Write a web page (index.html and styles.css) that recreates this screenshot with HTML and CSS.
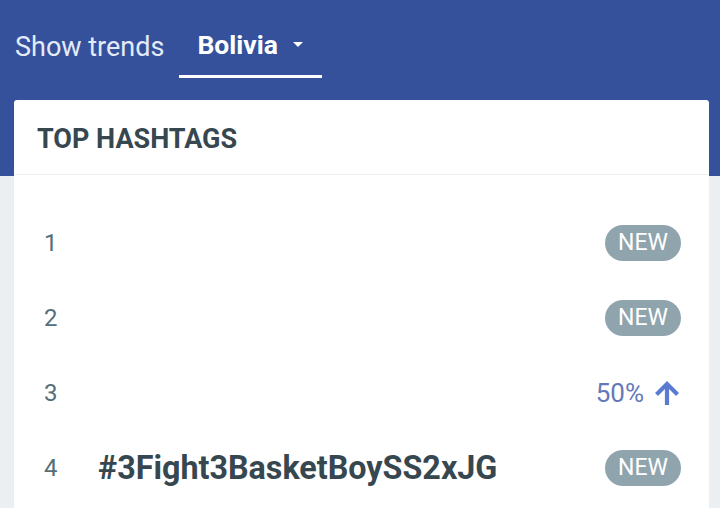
FILE: index.html
```html
<!DOCTYPE html>
<html>
<head>
<meta charset="utf-8">
<link rel="stylesheet" href="styles.css">
</head>
<body>
<header class="topbar">
  <nav class="nav">
    <span class="nav-label">Show trends</span>
    <div class="select">
      <span class="select-value">Bolivia</span>
      <span class="caret"></span>
    </div>
  </nav>
</header>
<main class="content">
  <section class="card">
    <h2 class="card-title">TOP HASHTAGS</h2>
    <ol class="list">
      <li class="row"><span class="rank">1</span><span class="tag"></span><span class="badge">NEW</span></li>
      <li class="row"><span class="rank">2</span><span class="tag"></span><span class="badge">NEW</span></li>
      <li class="row"><span class="rank">3</span><span class="tag"></span><span class="change">50%<svg class="arrow" viewBox="0 0 28 28" width="28" height="28"><path d="M14 26V5M3.5 15.5L14 5l10.5 10.5" fill="none" stroke="#5b7bd2" stroke-width="4.2" stroke-linejoin="miter"/></svg></span></li>
      <li class="row"><span class="rank">4</span><span class="tag">#3Fight3BasketBoySS2xJG</span><span class="badge">NEW</span></li>
    </ol>
  </section>
</main>
</body>
</html>
```

FILE: styles.css
```css
* { box-sizing: border-box; }
html, body { margin: 0; padding: 0; }
body {
  background: #eceff1;
  font-family: Roboto, "Liberation Sans", Arial, sans-serif;
  width: 720px;
  height: 508px;
  overflow: hidden;
}
.topbar {
  background: #35519b;
  height: 176px;
}
.nav {
  display: flex;
  align-items: stretch;
  height: 78px;
  padding-left: 15px;
}
.nav-label {
  color: #e4ebf8;
  font-size: 27px;
  line-height: 1;
  padding-top: 34px;
}
.select {
  margin-left: 15px;
  width: 143px;
  display: flex;
  align-items: flex-start;
  padding-left: 18px;
  padding-top: 32px;
  border-bottom: 3px solid #ffffff;
}
.select-value {
  color: #ffffff;
  font-weight: 700;
  font-size: 26.5px;
  line-height: 1;
}
.caret {
  width: 0;
  height: 0;
  margin-left: 15px;
  margin-top: 10px;
  border-left: 5px solid transparent;
  border-right: 5px solid transparent;
  border-top: 5px solid #ffffff;
}
.content {
  margin-top: -76px;
  padding: 0 11px 0 14px;
}
.card {
  background: #ffffff;
  border-radius: 3px;
  height: 420px;
}
.card-title {
  margin: 0;
  height: 75px;
  display: flex;
  align-items: center;
  padding-left: 23px;
  padding-top: 3px;
  font-size: 27px;
  font-weight: 700;
  color: #37474f;
  border-bottom: 1px solid #eceff1;
}
.list {
  list-style: none;
  margin: 0;
  padding: 30px 28px 0 30px;
}
.row {
  height: 75px;
  display: flex;
  align-items: center;
}
.rank {
  width: 54px;
  font-size: 24px;
  color: #546e7a;
}
.tag {
  flex: 1;
  font-size: 32.3px;
  font-weight: 700;
  color: #37474f;
}
.badge {
  background: #90a4ae;
  color: #ffffff;
  font-size: 23px;
  width: 76px;
  height: 36px;
  border-radius: 18px;
  display: flex;
  align-items: center;
  justify-content: center;
}
.change {
  display: flex;
  align-items: center;
  color: #6479b8;
  font-size: 26px;
}
.arrow {
  margin-left: 9px;
  margin-right: 0;
}
```
